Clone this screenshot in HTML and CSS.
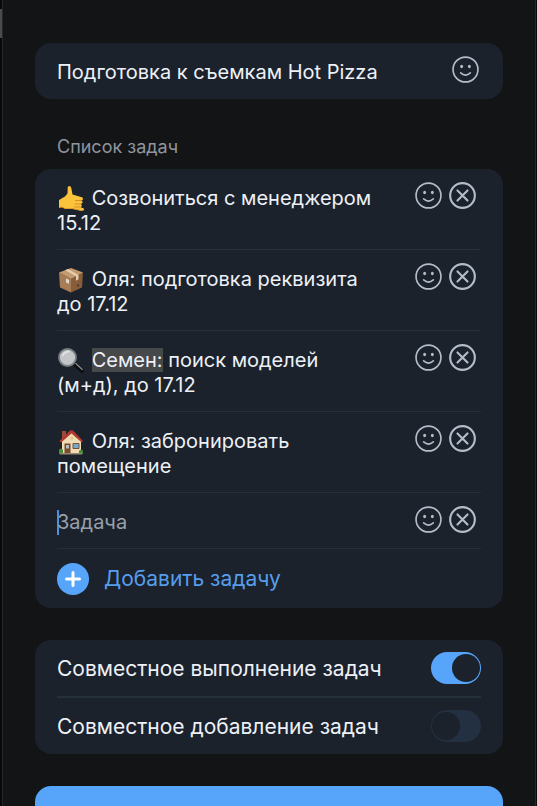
FILE: index.html
```
<!DOCTYPE html>
<html lang="ru">
<head>
    <meta charset="UTF-8">
    <meta name="viewport" content="width=device-width, initial-scale=1.0">
    <title>Список задач</title>
    <link rel="stylesheet" href="styles.css">
</head>
<body>
    <svg class="sprite" aria-hidden="true">
        <symbol id="smile" viewBox="0 0 28 28">
            <circle cx="14" cy="14" r="12.9" fill="none" stroke="currentColor" stroke-width="1.7"/>
            <ellipse cx="10" cy="11" rx="1.5" ry="1.8" fill="currentColor"/>
            <ellipse cx="18" cy="11" rx="1.5" ry="1.8" fill="currentColor"/>
            <path d="M9 17.500q5 4.600 10 0" fill="none" stroke="currentColor" stroke-width="1.7" stroke-linecap="round"/>
        </symbol>
        <symbol id="close" viewBox="0 0 28 28">
            <circle cx="14" cy="14" r="12.8" fill="none" stroke="currentColor" stroke-width="2.2"/>
            <path d="M8.800 8.800l10.400 10.400M19.200 8.800L8.800 19.200" stroke="currentColor" stroke-width="2.2" stroke-linecap="round"/>
        </symbol>
    </svg>

    <form class="dialog">
        <div class="card title">
            <input class="field" type="text" aria-label="Название" value="Подготовка к съемкам Hot Pizza">
            <button class="icon" type="button" aria-label="Эмодзи"><svg><use href="#smile"/></svg></button>
        </div>

        <h2>Список задач</h2>
        <div class="card">
            <div class="task">
                <div class="text" contenteditable="true" role="textbox" aria-label="Задача 1" spellcheck="false"><svg class="emoji" viewBox="0 0 26 26">
                    <path d="M1 14l6-3.500 2.500-3 .2-6q.1-1.500 1.600-1.500 1.500.1 2 2l1.200 6.500L23 11q2 .3 2 1.900-.1 1.500-2 1.600 1.800.6 1.600 2-.2 1.300-2 1.400 1.400.6 1.200 1.800-.2 1.200-1.600 1.300l3 1.200q1.200.6.7 1.700-.5 1-2 .8L14 22.500H7l-3-1.500-3 .5z" fill="#fbc23c"/>
                    <path d="M17 14.500l6 0M16.500 18l6 0M16 21h6" stroke="#d98e22" stroke-width="1"/>
                    <path d="M1 21.500l3-.5 3 1.500h7l10 2.200" fill="none" stroke="#e39a29" stroke-width="1"/>
                </svg> Созвониться с менеджером 15.12</div>
                <div class="actions">
                    <button class="icon" type="button" aria-label="Эмодзи"><svg><use href="#smile"/></svg></button>
                    <button class="icon" type="button" aria-label="Удалить"><svg><use href="#close"/></svg></button>
                </div>
            </div>
            <div class="task">
                <div class="text" contenteditable="true" role="textbox" aria-label="Задача 2" spellcheck="false"><svg class="emoji" viewBox="0 0 26 26">
                    <path d="M1 5.500L13 12v13.500L2 20.500z" fill="#a87c55"/>
                    <path d="M25 5.500L13 12v13.500l11-5z" fill="#875d3c"/>
                    <path d="M1 5.500L13 1l12 4.500L13 12z" fill="#c49a6e"/>
                    <path d="M7 3.200l11 6v4.500l2.500-1.500V8L10 2z" fill="#e3cfae"/>
                    <path d="M8 11.500l3 1.300v4l-3-1.300z" fill="#dfd9cf"/>
                    <circle cx="20" cy="18.500" r="1.300" fill="#5b3b24"/>
                </svg> Оля: подготовка реквизита до 17.12</div>
                <div class="actions">
                    <button class="icon" type="button" aria-label="Эмодзи"><svg><use href="#smile"/></svg></button>
                    <button class="icon" type="button" aria-label="Удалить"><svg><use href="#close"/></svg></button>
                </div>
            </div>
            <div class="task">
                <div class="text" contenteditable="true" role="textbox" aria-label="Задача 3" spellcheck="false"><svg class="emoji" viewBox="0 0 26 26">
                    <path d="M16 15.500l8 7.500" stroke="#0c0e10" stroke-width="4" stroke-linecap="round"/>
                    <path d="M17.500 15.200l7 6.600" stroke="#8a9096" stroke-width="1.200"/>
                    <circle cx="9.500" cy="9.500" r="8.500" fill="#c3c6c8" stroke="#7b8085" stroke-width="1.800"/>
                    <path d="M4.500 8q2-4.500 7-4.500" fill="none" stroke="#e6e8e9" stroke-width="1.500"/>
                </svg> <mark>Семен:</mark> поиск моделей (м+д), до 17.12</div>
                <div class="actions">
                    <button class="icon" type="button" aria-label="Эмодзи"><svg><use href="#smile"/></svg></button>
                    <button class="icon" type="button" aria-label="Удалить"><svg><use href="#close"/></svg></button>
                </div>
            </div>
            <div class="task">
                <div class="text" contenteditable="true" role="textbox" aria-label="Задача 4" spellcheck="false"><svg class="emoji" viewBox="0 0 26 26">
                    <path d="M4 2h4v8H4z" fill="#9c4b3b"/>
                    <path d="M4 11l9.500-8L23 12v12H4z" fill="#efdcb4"/>
                    <path d="M1.500 12L12 1.500h3L25 12l-1.500 1.300L13.500 4.500 3 13.500z" fill="#b3392f"/>
                    <path d="M6.500 14.500h6V24h-6z" fill="#7b4a2c"/>
                    <path d="M8 16h3v3.500H8z" fill="#b3bec1"/>
                    <path d="M15 14.500h6v5h-6z" fill="#74a9d0" stroke="#7b5138"/>
                    <path d="M12.500 8h2.500v2.500h-2.500z" fill="#d7c18f"/>
                    <path d="M1 21q2-3 4 0v4H1zM21 22q2-3 4 0v3h-4z" fill="#4c8b3b"/>
                    <path d="M2 24h22v1.500H2z" fill="#968770"/>
                </svg> Оля: забронировать помещение</div>
                <div class="actions">
                    <button class="icon" type="button" aria-label="Эмодзи"><svg><use href="#smile"/></svg></button>
                    <button class="icon" type="button" aria-label="Удалить"><svg><use href="#close"/></svg></button>
                </div>
            </div>
            <div class="task">
                <input class="text caret" type="text" placeholder="Задача" aria-label="Новая задача">
                <div class="actions">
                    <button class="icon" type="button" aria-label="Эмодзи"><svg><use href="#smile"/></svg></button>
                    <button class="icon" type="button" aria-label="Удалить"><svg><use href="#close"/></svg></button>
                </div>
            </div>
            <button class="add" type="button">
                <svg viewBox="0 0 32 32">
                    <circle cx="16" cy="16" r="16" fill="#57a4fb"/>
                    <path d="M16 9.500v13M9.500 16h13" stroke="#fff" stroke-width="3" stroke-linecap="round"/>
                </svg>
                Добавить задачу
            </button>
        </div>

        <div class="card options">
            <label class="option">Совместное выполнение задач <input type="checkbox" checked></label>
            <label class="option">Совместное добавление задач <input type="checkbox"></label>
        </div>

        <button class="submit" type="submit" aria-label="Отправить"></button>
    </form>
</body>
</html>
```

FILE: styles.css
```
* {
    box-sizing: border-box;
}
body {
    margin: 0;
    height: 100vh;
    overflow: hidden;
    padding: 0 1px 0 2px;
    /* edge of the page behind the dialog */
    background: linear-gradient(#4a4b4c, #4a4b4c) 0 9px / 2px 29px no-repeat #08090a;
    color: #edf1f7;
    font-family: Inter, "Noto Sans", sans-serif;
    font-size: 20px;
    line-height: 25px;
}
button, input {
    margin: 0;
    padding: 0;
    border: none;
    background: none;
    color: inherit;
    font: inherit;
    outline: none;
}
.sprite {
    position: absolute;
    width: 0;
    height: 0;
}
.dialog {
    min-height: 100%;
    padding: 43px 32px 32px;
    border: solid #25282b;
    border-width: 0 1px;
    background: #131416;
}
.card {
    padding: 0 22px;
    border-radius: 16px;
    background: #1b222c;
}
.title {
    display: flex;
    align-items: flex-start;
    height: 56px;
    padding-top: 13px;
    padding-right: 24px;
}
.field {
    flex: 1;
    min-width: 0;
    height: 32px;
}
.icon {
    display: block;
    width: 27px;
    height: 27px;
    color: #b3bdca;
}
.icon svg {
    display: block;
    width: 27px;
    height: 27px;
}
h2 {
    margin: 36px 22px 10px;
    color: #8f959f;
    font-size: 18px;
    font-weight: 400;
    line-height: 24px;
}
.task {
    display: flex;
    align-items: flex-start;
    padding: 17px 0 13px;
    border-bottom: 1px solid #26303b;
}
.text {
    flex: 1;
    min-width: 0;
    outline: none;
}
.emoji {
    width: 26px;
    height: 26px;
    margin: -4px 2px -4px 1px;
    vertical-align: -3px;
}
mark {
    background: #47484a;
    color: inherit;
}
.caret {
    background: linear-gradient(#4a91e4, #4a91e4) 0 0 / 2px 100% no-repeat;
}
.caret::placeholder {
    color: #98a0ab;
    opacity: 1;
}
.actions {
    display: flex;
    gap: 7px;
    margin: -4px 5px 0 36px;
}
.add {
    display: flex;
    align-items: center;
    gap: 15px;
    width: 100%;
    height: 59px;
    color: #569eed;
    font-size: 21px;
}
.add svg {
    width: 32px;
    height: 32px;
}
.options {
    margin-top: 32px;
    font-size: 21px;
}
.option {
    display: flex;
    align-items: center;
    justify-content: space-between;
    height: 56px;
}
.option + .option {
    height: 58px;
    border-top: 2px solid #26303b;
}
.option input {
    appearance: none;
    display: flex;
    width: 50px;
    height: 32px;
    padding: 2px 1px;
    border-radius: 16px;
    background: #233041;
}
.option input::before {
    content: "";
    width: 28px;
    height: 28px;
    border-radius: 50%;
    background: #1b222c;
}
.option input:checked {
    justify-content: flex-end;
    background: #57a4fb;
}
.submit {
    display: block;
    width: 100%;
    height: 56px;
    margin-top: 32px;
    border-radius: 16px;
    background: #57a4fb;
}
```
